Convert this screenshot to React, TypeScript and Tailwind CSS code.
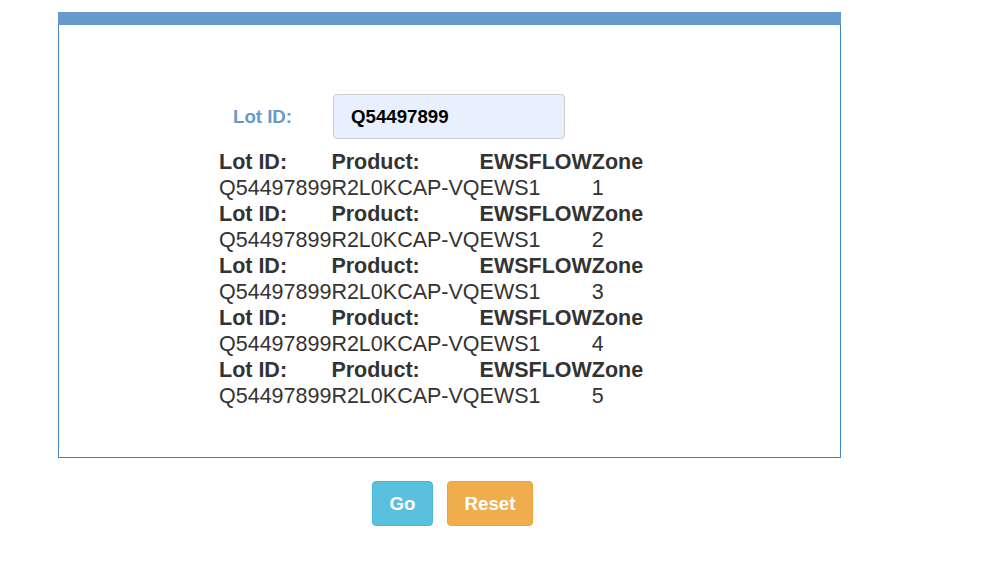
import React from "react";

export default function App() {
  const rows = [1, 2, 3, 4, 5];
  return (
    <div className="min-h-[570px] w-[994px] bg-white pt-[12px] pl-[58px] [font-family:'Liberation_Sans',Arial,sans-serif] text-[#333]">
      <div className="w-[783px]">
        <div className="h-[13px] bg-[#6699cc]" />
        <div className="border-x border-b border-[#3d84c2] pt-[69px] pb-[48px]">
          <div className="flex items-center">
            <label className="ml-[174px] w-[100px] text-[18.67px] font-bold text-[#6699cc]">
              Lot ID:
            </label>
            <div className="flex h-[45px] w-[232px] items-center rounded-[4px] border border-[#cccccc] bg-[#e8f0fe] pl-[17px] text-[18.67px] font-bold text-black">
              Q54497899
            </div>
          </div>
          <table className="mt-[10px] ml-[160px] border-collapse text-[21.5px] leading-[26px]">
            <tbody>
              {rows.map((n) => (
                <React.Fragment key={n}>
                  <tr className="font-bold">
                    <td className="p-0 whitespace-nowrap">Lot ID:</td>
                    <td className="p-0 whitespace-nowrap">Product:</td>
                    <td className="p-0 whitespace-nowrap">EWSFLOW</td>
                    <td className="p-0 whitespace-nowrap">Zone</td>
                  </tr>
                  <tr>
                    <td className="p-0 whitespace-nowrap">Q54497899</td>
                    <td className="p-0 whitespace-nowrap">R2L0KCAP-VQ</td>
                    <td className="p-0 whitespace-nowrap">EWS1</td>
                    <td className="p-0 whitespace-nowrap">{n}</td>
                  </tr>
                </React.Fragment>
              ))}
            </tbody>
          </table>
        </div>
        <div className="mt-[23px] flex gap-[14px] pl-[314px]">
          <button className="flex h-[45px] w-[61px] items-center justify-center rounded-[4px] border border-[#46b8da] bg-[#5bc0de] text-[18.67px] font-bold text-white">
            Go
          </button>
          <button className="flex h-[45px] w-[86px] items-center justify-center rounded-[4px] border border-[#eea236] bg-[#f0ad4e] text-[18.67px] font-bold text-white">
            Reset
          </button>
        </div>
      </div>
    </div>
  );
}
